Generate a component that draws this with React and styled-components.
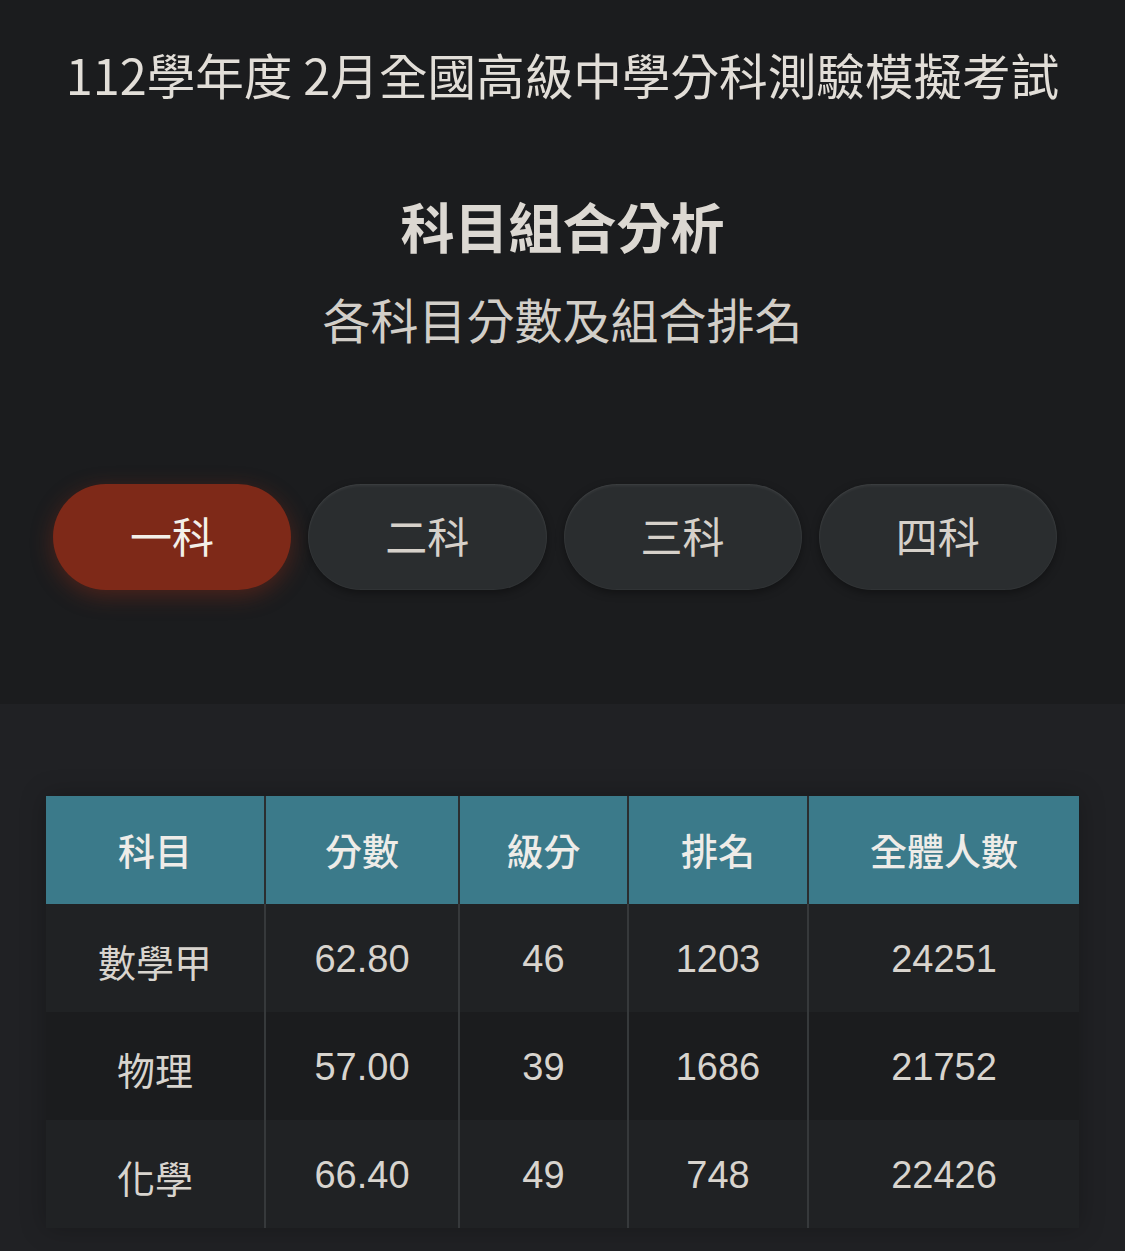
import React, { useState } from 'react';
import styled, { createGlobalStyle } from 'styled-components';

const GlobalStyle = createGlobalStyle`
  html, body {
    margin: 0;
    padding: 0;
    background: #1b1c1e;
  }
  body {
    font-family: "Noto Sans CJK TC", "Noto Sans", sans-serif;
  }
`;

const Page = styled.div`
  width: 1125px;
  min-height: 1251px;
  background: #202124;
`;

const Hero = styled.header`
  display: flex;
  flex-direction: column;
  align-items: center;
  background: #1b1c1e;
  padding: 38px 0 114px;
`;

const Title = styled.h1`
  margin: 0;
  font-size: 48.6px;
  line-height: 72px;
  font-weight: 400;
  color: #e2ded8;
`;

const Heading = styled.h2`
  margin: 80px 0 0;
  font-size: 54px;
  line-height: 72px;
  font-weight: 700;
  color: #dcd8d2;
`;

const Subtitle = styled.p`
  margin: 20px 0 0;
  font-size: 48px;
  line-height: 72px;
  font-weight: 400;
  color: #d2cec8;
`;

const Tabs = styled.div`
  align-self: stretch;
  display: flex;
  gap: 17px;
  margin-top: 130px;
  padding: 0 68px 0 53px;
`;

const Tab = styled.button`
  flex: 1;
  height: 106px;
  padding: 0 0 6px;
  border-radius: 53px;
  border: none;
  font-family: inherit;
  font-size: 42px;
  color: ${p => (p.$active ? '#f3efe9' : '#d6d1ca')};
  background: ${p => (p.$active ? '#7e2918' : '#2a2d2f')};
  box-shadow: ${p =>
    p.$active
      ? '0 6px 22px rgba(140, 45, 25, 0.45)'
      : 'inset 0 2px 3px rgba(255,255,255,0.06), inset 0 0 0 1px rgba(255,255,255,0.03), 0 3px 8px rgba(0,0,0,0.35)'};
  cursor: pointer;
`;

const TableSection = styled.section`
  padding: 92px 46px 22px;
`;

const Table = styled.table`
  width: 100%;
  border-collapse: collapse;
  table-layout: fixed;
  box-shadow: 0 0 24px rgba(0, 0, 0, 0.25);
`;

const Th = styled.th`
  height: 108px;
  padding: 0;
  background: #3b7a8a;
  color: #eeece8;
  font-size: 37px;
  font-weight: 500;
  border-left: 2px solid #2b2e30;
  &:first-child {
    border-left: none;
  }
`;

const Row = styled.tr`
  background: ${p => (p.$alt ? '#1b1c1e' : '#202224')};
`;

const Td = styled.td`
  height: 108px;
  box-sizing: border-box;
  padding: 2px 0 0;
  text-align: center;
  color: #d8d4ce;
  font-family: "Liberation Sans", "Noto Sans CJK TC", sans-serif;
  font-size: 38px;
  line-height: 44px;
  border-left: 2px solid #36393b;
  &:first-child {
    border-left: none;
    font-family: "Noto Sans CJK TC", sans-serif;
    padding: 6px 0 0;
  }
`;

const columns = [
  { label: '科目', width: 219 },
  { label: '分數', width: 194 },
  { label: '級分', width: 169 },
  { label: '排名', width: 180 },
  { label: '全體人數', width: 271 },
];

const rows = [
  ['數學甲', '62.80', '46', '1203', '24251'],
  ['物理', '57.00', '39', '1686', '21752'],
  ['化學', '66.40', '49', '748', '22426'],
];

const tabs = ['一科', '二科', '三科', '四科'];

export default function App() {
  const [active, setActive] = useState(0);

  return (
    <Page>
      <GlobalStyle />
      <Hero>
        <Title>112學年度 2月全國高級中學分科測驗模擬考試</Title>
        <Heading>科目組合分析</Heading>
        <Subtitle>各科目分數及組合排名</Subtitle>
        <Tabs>
          {tabs.map((t, i) => (
            <Tab key={t} $active={i === active} onClick={() => setActive(i)}>
              {t}
            </Tab>
          ))}
        </Tabs>
      </Hero>
      <TableSection>
        <Table>
          <colgroup>
            {columns.map(c => (
              <col key={c.label} style={{ width: c.width }} />
            ))}
          </colgroup>
          <thead>
            <tr>
              {columns.map(c => (
                <Th key={c.label}>{c.label}</Th>
              ))}
            </tr>
          </thead>
          <tbody>
            {rows.map((r, i) => (
              <Row key={r[0]} $alt={i % 2 === 1}>
                {r.map((v, j) => (
                  <Td key={j}>{v}</Td>
                ))}
              </Row>
            ))}
          </tbody>
        </Table>
      </TableSection>
    </Page>
  );
}
